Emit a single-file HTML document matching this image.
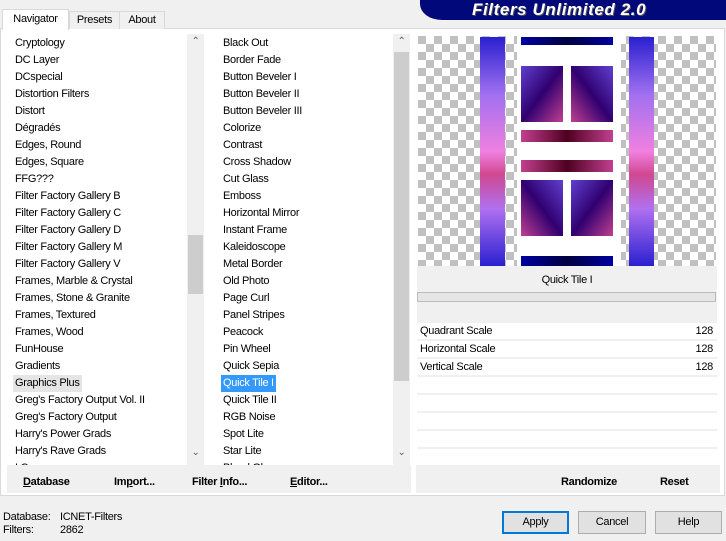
<!DOCTYPE html>
<html><head><meta charset="utf-8"><style>
*{margin:0;padding:0;box-sizing:border-box}
body{width:726px;height:541px;background:#f0f0f0;font-family:"Liberation Sans",sans-serif;font-size:11px;letter-spacing:-0.3px;color:#000;position:relative;overflow:hidden}
.a{position:absolute}
.it{position:absolute;left:0;height:17px;line-height:17px;white-space:nowrap}
.sb{position:absolute;background:#f0f0f0;width:17px}
.arr{position:absolute;left:0;width:17px;text-align:center;font-size:10px;color:#606060}
.btn{position:absolute;height:23px;background:#e1e1e1;border:1px solid #adadad;text-align:center;line-height:21px}
.bb{position:absolute;font-weight:bold;top:476px}
.row{position:absolute;left:417px;width:300px;height:16px;background:#fff;line-height:17px}
</style></head><body>
<div class="a" style="left:420px;top:0;width:306px;height:20px;background:#00087a;border-bottom-left-radius:22px 16px"></div>
<div class="a" style="left:472px;top:0px;font-size:17px;line-height:19px;font-weight:bold;font-style:italic;color:#fff;letter-spacing:0.6px;text-shadow:1px 1px 0 #555">Filters Unlimited 2.0</div>
<div class="a" style="left:0;top:28px;width:725px;height:468px;border:1px solid #d9d9d9;background:#fff"></div>
<div class="a" style="left:2px;top:9px;width:67px;height:21px;background:#fff;border:1px solid #d9d9d9;border-bottom:none;line-height:18px;text-align:center">Navigator</div>
<div class="a" style="left:69px;top:11px;width:51px;height:18px;background:#f0f0f0;border:1px solid #d9d9d9;border-bottom:none;line-height:17px;text-align:center">Presets</div>
<div class="a" style="left:119px;top:11px;width:46px;height:18px;background:#f0f0f0;border:1px solid #d9d9d9;border-bottom:none;line-height:17px;text-align:center">About</div>
<div class="a" style="left:7px;top:34px;width:198px;height:431px;background:#fff;overflow:hidden">
<div class="a" style="left:8px;top:1px">
<div class="it" style="top:0">Cryptology</div><div class="it" style="top:17px">DC Layer</div><div class="it" style="top:34px">DCspecial</div><div class="it" style="top:51px">Distortion Filters</div><div class="it" style="top:68px">Distort</div><div class="it" style="top:85px">Dégradés</div><div class="it" style="top:102px">Edges, Round</div><div class="it" style="top:119px">Edges, Square</div><div class="it" style="top:136px">FFG???</div><div class="it" style="top:153px">Filter Factory Gallery B</div><div class="it" style="top:170px">Filter Factory Gallery C</div><div class="it" style="top:187px">Filter Factory Gallery D</div><div class="it" style="top:204px">Filter Factory Gallery M</div><div class="it" style="top:221px">Filter Factory Gallery V</div><div class="it" style="top:238px">Frames, Marble &amp; Crystal</div><div class="it" style="top:255px">Frames, Stone &amp; Granite</div><div class="it" style="top:272px">Frames, Textured</div><div class="it" style="top:289px">Frames, Wood</div><div class="it" style="top:306px">FunHouse</div><div class="it" style="top:323px">Gradients</div><div class="it" style="top:340px;left:-2px;padding:0 2px;background:#e5e5e5">Graphics Plus</div><div class="it" style="top:357px">Greg's Factory Output Vol. II</div><div class="it" style="top:374px">Greg's Factory Output</div><div class="it" style="top:391px">Harry's Power Grads</div><div class="it" style="top:408px">Harry's Rave Grads</div><div class="it" style="top:425px">I.C.</div>
</div>
<div class="sb" style="left:180px;top:0;height:431px"><div class="arr" style="top:2px">&#8963;</div><div class="a" style="left:1px;top:201px;width:15px;height:59px;background:#cdcdcd"></div><div class="arr" style="top:413px">&#8964;</div></div>
</div>
<div class="a" style="left:215px;top:34px;width:196px;height:431px;background:#fff;overflow:hidden">
<div class="a" style="left:0;top:1px;width:178px">
<div class="it" style="left:8px;top:0">Black Out</div><div class="it" style="left:8px;top:17px">Border Fade</div><div class="it" style="left:8px;top:34px">Button Beveler I</div><div class="it" style="left:8px;top:51px">Button Beveler II</div><div class="it" style="left:8px;top:68px">Button Beveler III</div><div class="it" style="left:8px;top:85px">Colorize</div><div class="it" style="left:8px;top:102px">Contrast</div><div class="it" style="left:8px;top:119px">Cross Shadow</div><div class="it" style="left:8px;top:136px">Cut Glass</div><div class="it" style="left:8px;top:153px">Emboss</div><div class="it" style="left:8px;top:170px">Horizontal Mirror</div><div class="it" style="left:8px;top:187px">Instant Frame</div><div class="it" style="left:8px;top:204px">Kaleidoscope</div><div class="it" style="left:8px;top:221px">Metal Border</div><div class="it" style="left:8px;top:238px">Old Photo</div><div class="it" style="left:8px;top:255px">Page Curl</div><div class="it" style="left:8px;top:272px">Panel Stripes</div><div class="it" style="left:8px;top:289px">Peacock</div><div class="it" style="left:8px;top:306px">Pin Wheel</div><div class="it" style="left:8px;top:323px">Quick Sepia</div><div class="it" style="left:6px;top:340px;padding:0 2px;background:#3399ff;color:#fff">Quick Tile I</div><div class="it" style="left:8px;top:357px">Quick Tile II</div><div class="it" style="left:8px;top:374px">RGB Noise</div><div class="it" style="left:8px;top:391px">Spot Lite</div><div class="it" style="left:8px;top:408px">Star Lite</div><div class="it" style="left:8px;top:425px">Blend Glow</div>
</div>
<div class="sb" style="left:178px;top:0;height:431px"><div class="arr" style="top:2px">&#8963;</div><div class="a" style="left:1px;top:18px;width:15px;height:329px;background:#cdcdcd"></div><div class="arr" style="top:413px">&#8964;</div></div>
</div>
<svg class="a" style="left:416px;top:33px" width="304" height="233" viewBox="0 0 304 233">
<defs>
<pattern id="ck" width="16" height="16" patternUnits="userSpaceOnUse" x="2" y="3"><rect width="16" height="16" fill="#fff"/><rect width="8" height="8" fill="#c0c0c0"/><rect x="8" y="8" width="8" height="8" fill="#c0c0c0"/></pattern>
<linearGradient id="st" x1="0" y1="0" x2="0" y2="1"><stop offset="0" stop-color="#2a20d0"/><stop offset=".25" stop-color="#a070f0"/><stop offset=".5" stop-color="#f080e0"/><stop offset=".6" stop-color="#d04890"/><stop offset=".75" stop-color="#b070f0"/><stop offset="1" stop-color="#2a20d0"/></linearGradient>
<linearGradient id="q1" x1="0" y1="0" x2="1" y2="1"><stop offset="0" stop-color="#6040d0"/><stop offset=".5" stop-color="#300070"/><stop offset="1" stop-color="#c04090"/></linearGradient>
<linearGradient id="q2" x1="1" y1="0" x2="0" y2="1"><stop offset="0" stop-color="#6040d0"/><stop offset=".5" stop-color="#300070"/><stop offset="1" stop-color="#c04090"/></linearGradient>
<linearGradient id="hb" x1="0" y1="0" x2="1" y2="0"><stop offset="0" stop-color="#c04090"/><stop offset=".5" stop-color="#500020"/><stop offset="1" stop-color="#c04090"/></linearGradient>
<linearGradient id="nb" x1="0" y1="0" x2="1" y2="0"><stop offset="0" stop-color="#0000a0"/><stop offset=".5" stop-color="#000040"/><stop offset="1" stop-color="#0000a0"/></linearGradient>
</defs>
<rect width="304" height="233" fill="#fff"/>
<rect x="2" y="3" width="298" height="230" fill="url(#ck)"/>
<rect x="101" y="3" width="104" height="230" fill="#fff"/>
<rect x="64" y="4" width="25" height="229" fill="url(#st)"/>
<rect x="213" y="4" width="25" height="229" fill="url(#st)"/>
<rect x="105" y="4" width="92" height="8" fill="url(#nb)"/>
<rect x="105" y="33" width="42" height="56" fill="url(#q1)"/>
<rect x="155" y="33" width="42" height="56" fill="url(#q2)"/>
<rect x="105" y="97" width="92" height="12" fill="url(#hb)"/>
<rect x="105" y="127" width="92" height="12" fill="url(#hb)"/>
<rect x="105" y="147" width="42" height="56" fill="url(#q2)"/>
<rect x="155" y="147" width="42" height="56" fill="url(#q1)"/>
<rect x="105" y="223" width="92" height="10" fill="url(#nb)"/>
</svg>
<div class="a" style="left:417px;top:266px;width:300px;height:200px;background:#f0f0f0"></div>
<div class="a" style="left:417px;top:266px;width:300px;text-align:center;line-height:28px">Quick Tile I</div>
<div class="a" style="left:417px;top:292px;width:299px;height:10px;background:#e5e5e5;border:1px solid #bcbcbc"></div>
<div class="row" style="top:323px"><span style="padding-left:3px">Quadrant Scale</span><span style="position:absolute;right:4px">128</span></div>
<div class="row" style="top:341px"><span style="padding-left:3px">Horizontal Scale</span><span style="position:absolute;right:4px">128</span></div>
<div class="row" style="top:359px"><span style="padding-left:3px">Vertical Scale</span><span style="position:absolute;right:4px">128</span></div>
<div class="row" style="top:377px"></div><div class="row" style="top:395px"></div><div class="row" style="top:413px"></div><div class="row" style="top:431px"></div><div class="row" style="top:449px;height:16px"></div>
<div class="a" style="left:7px;top:465px;width:404px;height:28px;background:#f0f0f0"></div>
<div class="a" style="left:416px;top:465px;width:304px;height:28px;background:#f0f0f0"></div>
<div class="bb" style="left:23px"><u>D</u>atabase</div>
<div class="bb" style="left:114px">Im<u>p</u>ort...</div>
<div class="bb" style="left:192px">Filter <u>I</u>nfo...</div>
<div class="bb" style="left:290px"><u>E</u>ditor...</div>
<div class="bb" style="left:561px">Randomize</div>
<div class="bb" style="left:660px">Reset</div>
<div class="a" style="left:3px;top:511px;line-height:13px">Database:<br>Filters:</div>
<div class="a" style="left:60px;top:511px;line-height:13px">ICNET-Filters<br>2862</div>
<div class="btn" style="left:502px;top:511px;width:67px;border:2px solid #0078d7;line-height:19px">Apply</div>
<div class="btn" style="left:578px;top:511px;width:68px">Cancel</div>
<div class="btn" style="left:655px;top:511px;width:67px">Help</div>
</body></html>
